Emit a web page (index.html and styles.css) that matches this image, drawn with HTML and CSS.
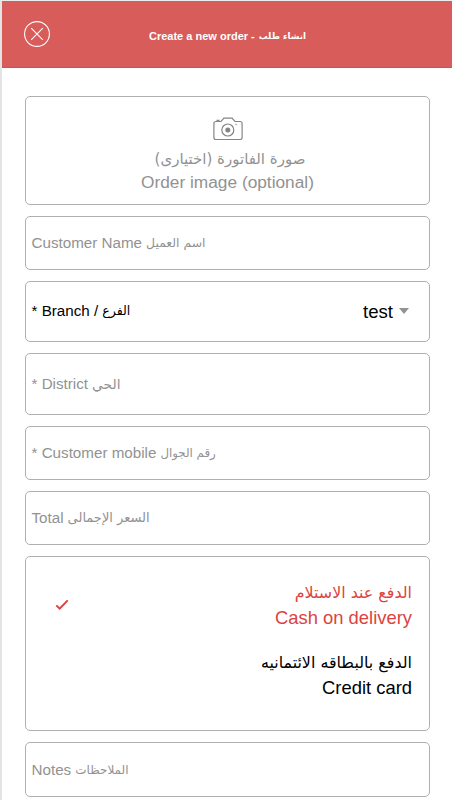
FILE: index.html
```html
<!DOCTYPE html>
<html lang="en">
<head>
<meta charset="utf-8">
<title>Create a new order</title>
<link rel="stylesheet" href="styles.css">
</head>
<body>
<div class="screen">
  <header class="header">
    <svg class="close" viewBox="0 0 28 28"><circle cx="14" cy="14" r="12.4"/><path d="M8.2 8.2l11.6 11.6M19.8 8.2L8.2 19.8"/></svg>
    <h1 class="title"><span class="en">Create a new order -</span><span class="ar" lang="ar" dir="rtl">انشاء طلب</span></h1>
  </header>
  <main class="form">
    <section class="box upload">
      <svg class="camera" viewBox="0 0 30 24"><path d="M2.5 4.5H8L11 1.1h8l3 3.4h5.2q1.9 0 1.9 1.9v14.2q0 1.9-1.9 1.9H2.8Q.9 22.5.9 20.6V6.4Q.9 4.5 2.8 4.500M3.5 3.4h3"/><circle cx="14.8" cy="13" r="6"/><circle class="dot" cx="14.8" cy="13" r="2.5"/><circle class="dot" cx="23" cy="7.5" r=".7"/></svg>
      <span class="ar upload-ar" lang="ar" dir="rtl">صورة الفاتورة (اختيارى)</span>
      <span class="upload-en">Order image (optional)</span>
    </section>
    <div class="box field customer"><span class="en">Customer Name</span><span class="ar" lang="ar" dir="rtl">اسم العميل</span></div>
    <div class="box field branch"><span class="en">* Branch /</span><span class="ar" lang="ar" dir="rtl">الفرع</span><span class="value">test</span><span class="caret"></span></div>
    <div class="box field district"><span class="en">* District</span><span class="ar" lang="ar" dir="rtl">الحي</span></div>
    <div class="box field mobile"><span class="en">* Customer mobile</span><span class="ar" lang="ar" dir="rtl">رقم الجوال</span></div>
    <div class="box field"><span class="en">Total</span><span class="ar" lang="ar" dir="rtl">السعر الإجمالى</span></div>
    <section class="box payment">
      <div class="option selected">
        <svg class="check" viewBox="0 0 14 12"><path d="M1.3 6.400l3.4 3.300L12.7 1.400"/></svg>
        <div class="labels"><span class="ar" lang="ar" dir="rtl">الدفع عند الاستلام</span><span class="name">Cash on delivery</span></div>
      </div>
      <div class="option">
        <div class="labels"><span class="ar" lang="ar" dir="rtl">الدفع بالبطاقه الائتمانيه</span><span class="name">Credit card</span></div>
      </div>
    </section>
    <div class="box field notes"><span class="en">Notes</span><span class="ar" lang="ar" dir="rtl">الملاحظات</span></div>
  </main>
</div>
</body>
</html>
```
FILE: styles.css
```css
* { box-sizing: border-box; }
body {
  margin: 0;
  background: #fff;
  font-family: "Liberation Sans", "DejaVu Sans", sans-serif;
  color: #000;
}
.screen {
  height: 800px;
  overflow: hidden;
  border-top: 1px solid #ececec;
  border-left: 2px solid #e4e4e4;
}
.header {
  display: flex;
  align-items: center;
  height: 67px;
  padding: 4px 0 0 21px;
  background: #d85c59;
  border-bottom: 1px solid #d3504d;
  color: #fff;
}
.close {
  width: 28px;
  height: 28px;
  margin-top: -4px;
  fill: none;
  stroke: #fff;
  stroke-width: 1.1;
}
.title {
  display: flex;
  align-items: center;
  gap: 4px;
  margin: 0 0 0 98px;
  font-size: 11px;
  line-height: 16px;
  white-space: nowrap;
}
.ar { font-family: "DejaVu Sans", sans-serif; white-space: nowrap; }
.title .ar { font-size: 8.8px; }
.form {
  display: flex;
  flex-direction: column;
  gap: 11px;
  padding: 28px 22px 0 23px;
}
.box {
  flex: none;
  border: 1px solid #b0b0b0;
  border-radius: 5px;
}
.upload {
  display: flex;
  flex-direction: column;
  align-items: center;
  height: 109px;
  padding-top: 20px;
  color: #929292;
}
.camera { width: 30px; height: 24px; fill: none; stroke: #858585; stroke-width: 1.2; }
.camera .dot { fill: #858585; stroke: none; }
.upload-ar { margin: 7px 0 0 5px; font-size: 15px; line-height: 23px; }
.upload-en { font-size: 17.3px; line-height: 23px; }
.field {
  display: flex;
  align-items: center;
  gap: 4px;
  height: 54px;
  padding: 0 20px 0 5.5px;
  color: #929292;
  font-size: 15.2px;
  line-height: 20px;
  white-space: nowrap;
}
.field .ar { font-size: 13px; }
.customer .ar { font-size: 12.4px; }
.mobile .ar { font-size: 11.8px; }
.branch { height: 61px; padding-bottom: 2px; color: #000; }
.branch .ar { font-size: 12.6px; }
.district { height: 62px; }
.district .ar { font-size: 13.8px; }
.notes { height: 55px; }
.notes .ar { font-size: 12px; }
.value { margin: 2px 0 0 auto; font-size: 18.6px; }
.caret {
  margin-left: 2px;
  border: 5px solid transparent;
  border-top: 6px solid #929292;
  border-bottom: 0;
}
.payment {
  display: flex;
  flex-direction: column;
  gap: 20px;
  height: 175px;
  padding: 23px 17px 0 29px;
}
.option { display: flex; height: 50px; font-size: 18.4px; line-height: 25px; }
.labels { display: flex; flex-direction: column; align-items: flex-end; margin-left: auto; }
.labels .ar { font-size: 15.9px; }
.selected { color: #dc4340; }
.check { width: 14px; height: 12px; margin-top: 19px; fill: none; stroke: #dc4340; stroke-width: 2; }
```
